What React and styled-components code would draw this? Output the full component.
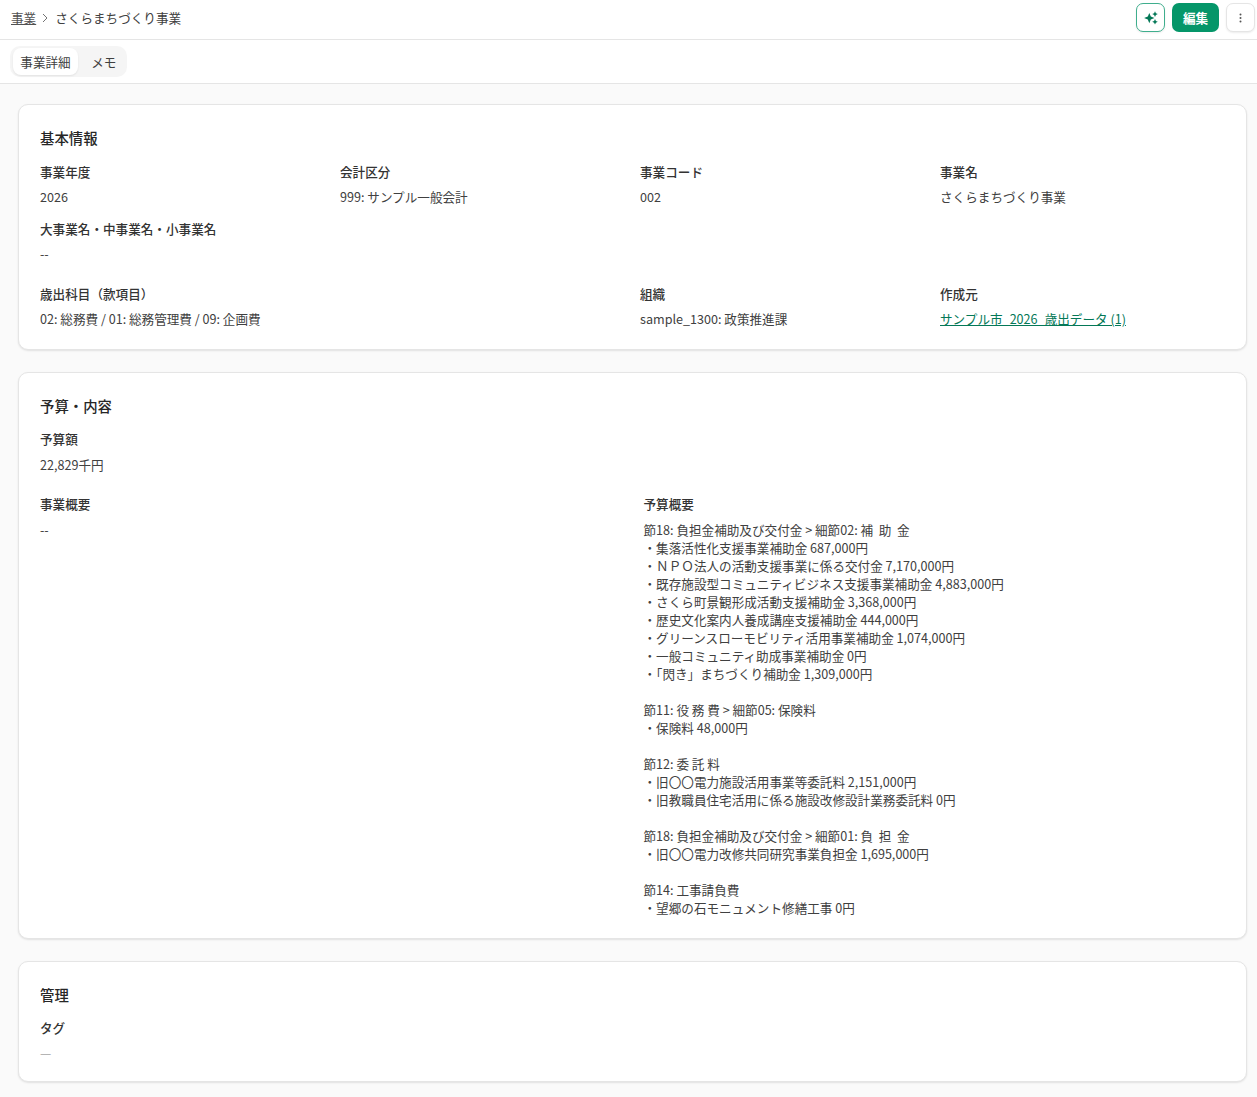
import styled, { createGlobalStyle } from 'styled-components';

const budgetLines = `節18: 負担金補助及び交付金 > 細節02: 補  助  金
・集落活性化支援事業補助金 687,000円
・ＮＰＯ法人の活動支援事業に係る交付金 7,170,000円
・既存施設型コミュニティビジネス支援事業補助金 4,883,000円
・さくら町景観形成活動支援補助金 3,368,000円
・歴史文化案内人養成講座支援補助金 444,000円
・グリーンスローモビリティ活用事業補助金 1,074,000円
・一般コミュニティ助成事業補助金 0円
・「閃き」まちづくり補助金 1,309,000円

節11: 役 務 費 > 細節05: 保険料
・保険料 48,000円

節12: 委 託 料
・旧〇〇電力施設活用事業等委託料 2,151,000円
・旧教職員住宅活用に係る施設改修設計業務委託料 0円

節18: 負担金補助及び交付金 > 細節01: 負  担  金
・旧〇〇電力改修共同研究事業負担金 1,695,000円

節14: 工事請負費
・望郷の石モニュメント修繕工事 0円`;

export default function App() {
    return (
        <>
            <GlobalStyle />
            <Header>
                <Breadcrumb>
                    <CrumbLink>事業</CrumbLink>
                    <CrumbArrow viewBox="0 0 8 10">
                        <path d="M2 1l4 4-4 4" />
                    </CrumbArrow>
                    <span>さくらまちづくり事業</span>
                </Breadcrumb>
                <Actions>
                    <AiButton>
                        <svg width="14" height="14" viewBox="0 0 14 14" fill="#047857">
                            <path d="M5.3 1.9l1.5 3.7 3.7 1.5-3.7 1.5-1.5 3.7-1.5-3.7L.1 7.1l3.7-1.5z" />
                            <path d="M11 .3l.9 1.9 1.9.9-1.9.9-.9 1.9-.9-1.9-1.9-.9 1.9-.9z" />
                            <path d="M11 8l.9 1.9 1.9.9-1.9.9-.9 1.9-.9-1.9-1.9-.9 1.9-.9z" />
                        </svg>
                    </AiButton>
                    <EditButton>編集</EditButton>
                    <MoreButton>
                        <svg width="12" height="12" viewBox="0 0 12 12" fill="#555">
                            <circle cx="5.5" cy="2.5" r="1" />
                            <circle cx="5.5" cy="6" r="1" />
                            <circle cx="5.5" cy="9.5" r="1" />
                        </svg>
                    </MoreButton>
                </Actions>
            </Header>
            <TabBar>
                <Tabs>
                    <Tab $active>事業詳細</Tab>
                    <Tab>メモ</Tab>
                </Tabs>
            </TabBar>
            <Content>
                <Card>
                    <CardTitle>基本情報</CardTitle>
                    <Grid>
                        <Field label="事業年度">2026</Field>
                        <Field label="会計区分">999: サンプル一般会計</Field>
                        <Field label="事業コード">002</Field>
                        <Field label="事業名">さくらまちづくり事業</Field>
                        <Field label="大事業名・中事業名・小事業名" span={4}>--</Field>
                        <Field label="歳出科目（款項目）" span={2} top={8}>02: 総務費 / 01: 総務管理費 / 09: 企画費</Field>
                        <Field label="組織" top={8}>sample_1300: 政策推進課</Field>
                        <Field label="作成元" top={8}>
                            <SourceLink>サンプル市_2026_歳出データ (1)</SourceLink>
                        </Field>
                    </Grid>
                </Card>
                <Card>
                    <CardTitle>予算・内容</CardTitle>
                    <Field label="予算額">22,829千円</Field>
                    <TwoColumns>
                        <Field label="事業概要">--</Field>
                        <Field label="予算概要">
                            <Multiline>{budgetLines}</Multiline>
                        </Field>
                    </TwoColumns>
                </Card>
                <Card>
                    <CardTitle>管理</CardTitle>
                    <Field label="タグ">
                        <Muted>—</Muted>
                    </Field>
                </Card>
            </Content>
        </>
    );
}

function Field({ label, span, top, children }) {
    return (
        <FieldBox $span={span} $top={top}>
            <Label>{label}</Label>
            <Value>{children}</Value>
        </FieldBox>
    );
}

const GlobalStyle = createGlobalStyle`
    body {
        margin: 0;
        background: #ffffff;
        color: #262626;
        font-family: 'Noto Sans CJK JP', 'Noto Sans', sans-serif;
        font-size: 12.6px;
    }
`
const Header = styled.header`
    height: 35px;
    display: flex;
    align-items: center;
    justify-content: space-between;
    padding: 0 2px 4px 11px;
    background: #ffffff;
    border-bottom: 1px solid #e5e5e5;
`
const Breadcrumb = styled.nav`
    display: flex;
    align-items: center;
    gap: 5px;
    color: #404040;
`
const CrumbLink = styled.a`
    color: #525252;
    text-decoration: underline;
`
const CrumbArrow = styled.svg`
    width: 8px;
    height: 10px;
    fill: none;
    stroke: #737373;
    stroke-width: 1;
    margin-right: 1px;
`
const Actions = styled.div`
    display: flex;
    align-items: center;
    gap: 7px;
`
const IconButton = styled.button`
    width: 29px;
    height: 29px;
    padding: 0;
    display: flex;
    align-items: center;
    justify-content: center;
    background: #ffffff;
    border-radius: 7px;
    box-shadow: 0 1px 2px rgba(0, 0, 0, 0.08);
`
const AiButton = styled(IconButton)`
    border: 1px solid #3fae8d;
`
const MoreButton = styled(IconButton)`
    border: 1px solid #e5e5e5;
`
const EditButton = styled.button`
    width: 47px;
    height: 29px;
    padding: 0;
    border: none;
    border-radius: 7px;
    background: #059669;
    color: #ffffff;
    font-family: inherit;
    font-size: 12.6px;
    font-weight: 700;
`
const TabBar = styled.div`
    height: 43px;
    display: flex;
    align-items: center;
    padding-left: 10px;
    background: #ffffff;
    border-bottom: 1px solid #e5e5e5;
`
const Tabs = styled.div`
    height: 31px;
    display: flex;
    align-items: center;
    gap: 6px;
    padding: 0 3px;
    border-radius: 10px;
    background: #f5f5f5;
`
const Tab = styled.div`
    height: 26px;
    padding: 0 7.3px 1px;
    display: flex;
    align-items: center;
    border-radius: 8px;
    background: ${(props) => (props.$active ? '#ffffff' : 'transparent')};
    box-shadow: ${(props) => (props.$active ? '0 1px 2px rgba(0, 0, 0, 0.08)' : 'none')};
    color: #404040;
`
const Content = styled.main`
    display: flex;
    flex-direction: column;
    gap: 21.6px;
    padding: 20px 10px 15px 18px;
    background: #fafafa;
`
const Card = styled.section`
    padding: 21px 21px 18.4px;
    background: #ffffff;
    border: 1px solid #e5e5e5;
    border-radius: 10px;
    box-shadow: 0 1px 2px rgba(0, 0, 0, 0.1);
`
const CardTitle = styled.h2`
    margin: 0 0 12.5px;
    font-size: 14.4px;
    font-weight: 500;
    line-height: 24px;
`
const Grid = styled.div`
    display: grid;
    grid-template-columns: repeat(4, 1fr);
    column-gap: 15px;
    row-gap: 10.5px;
`
const TwoColumns = styled.div`
    display: grid;
    grid-template-columns: 1fr 1fr;
    column-gap: 22px;
    margin-top: 18.5px;
`
const FieldBox = styled.div`
    grid-column: span ${(props) => props.$span || 1};
    margin-top: ${(props) => props.$top || 0}px;
    min-width: 0;
`
const Label = styled.div`
    color: #333333;
    font-weight: 500;
    line-height: 18px;
    margin-bottom: 4.5px;
`
const Value = styled.div`
    color: #404040;
    line-height: 24px;
`
const Multiline = styled.div`
    white-space: pre-wrap;
    line-height: 18px;
    padding: 3px 0 2.6px;
`
const SourceLink = styled.a`
    color: #047857;
    text-decoration: underline;
`
const Muted = styled.span`
    display: block;
    line-height: 21px;
    color: #a3a3a3;
`
